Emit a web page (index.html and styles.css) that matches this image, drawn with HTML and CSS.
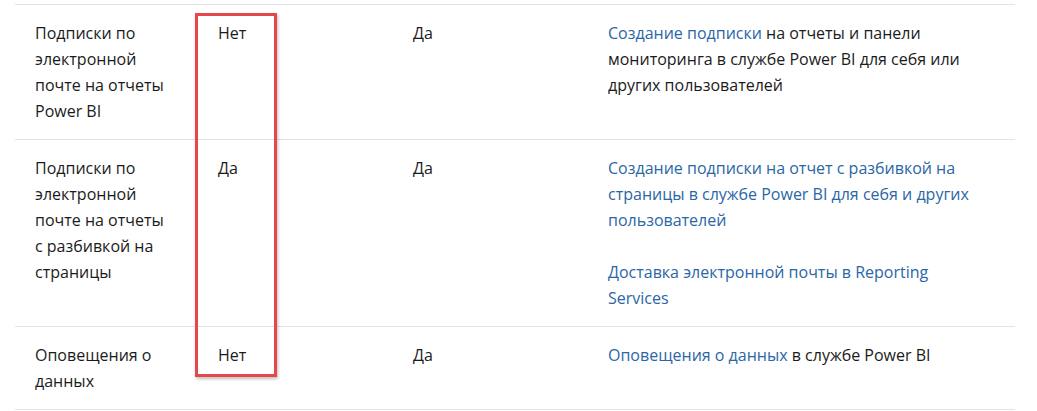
FILE: index.html
```html
<!DOCTYPE html>
<html lang="ru">
<head>
<meta charset="utf-8">
<link rel="stylesheet" href="styles.css">
</head>
<body>
<div class="wrap">
  <table class="tbl">
    <colgroup>
      <col class="c1"><col class="c2"><col class="c3"><col class="c4">
    </colgroup>
    <tbody>
      <tr>
        <td>Подписки по электронной почте на отчеты Power BI</td>
        <td>Нет</td>
        <td>Да</td>
        <td><p><a href="#">Создание подписки</a> на&nbsp;отчеты и панели мониторинга в службе Power BI для себя или других пользователей</p></td>
      </tr>
      <tr>
        <td>Подписки по электронной почте на отчеты с разбивкой на страницы</td>
        <td>Да</td>
        <td>Да</td>
        <td>
          <p><a href="#">Создание подписки на отчет с разбивкой на страницы в службе Power BI для себя и других пользователей</a></p>
          <p><a href="#">Доставка электронной почты в Reporting Services</a></p>
        </td>
      </tr>
      <tr>
        <td>Оповещения о данных</td>
        <td>Нет</td>
        <td>Да</td>
        <td><p><a href="#">Оповещения о данных</a> в службе Power BI</p></td>
      </tr>
    </tbody>
  </table>
  <div class="highlight"></div>
</div>
</body>
</html>
```

FILE: styles.css
```css
html, body {
  margin: 0;
  padding: 0;
  background: #ffffff;
}
body {
  font-family: "Open Sans", "Noto Sans", "Liberation Sans", sans-serif;
  font-size: 16px;
  line-height: 26px;
  color: #1b1b1b;
}
.wrap {
  position: relative;
  padding: 4px 22px 0 15px;
}
.tbl {
  width: 1000px;
  border-collapse: collapse;
  table-layout: fixed;
}
.c1 { width: 183px; }
.c2 { width: 195px; }
.c3 { width: 195px; }
.c4 { width: 427px; }
.tbl td {
  vertical-align: top;
  padding: 15px 20px 15px 20px;
  border-top: 1px solid #e3e3e3;
  border-bottom: 1px solid #e3e3e3;
}
.tbl td:nth-child(1) {
  padding-right: 26px;
}
.tbl td:nth-child(4) {
  padding-right: 30px;
}
.tbl p {
  margin: 0;
}
.tbl p + p {
  margin-top: 26px;
}
.tbl a {
  color: #2b66a6;
  text-decoration: none;
}
.highlight {
  position: absolute;
  left: 195px;
  top: 13px;
  width: 76px;
  height: 358px;
  border: 3px solid #e5484b;
  box-shadow: 1px 2px 3px rgba(0, 0, 0, 0.25);
}
```
